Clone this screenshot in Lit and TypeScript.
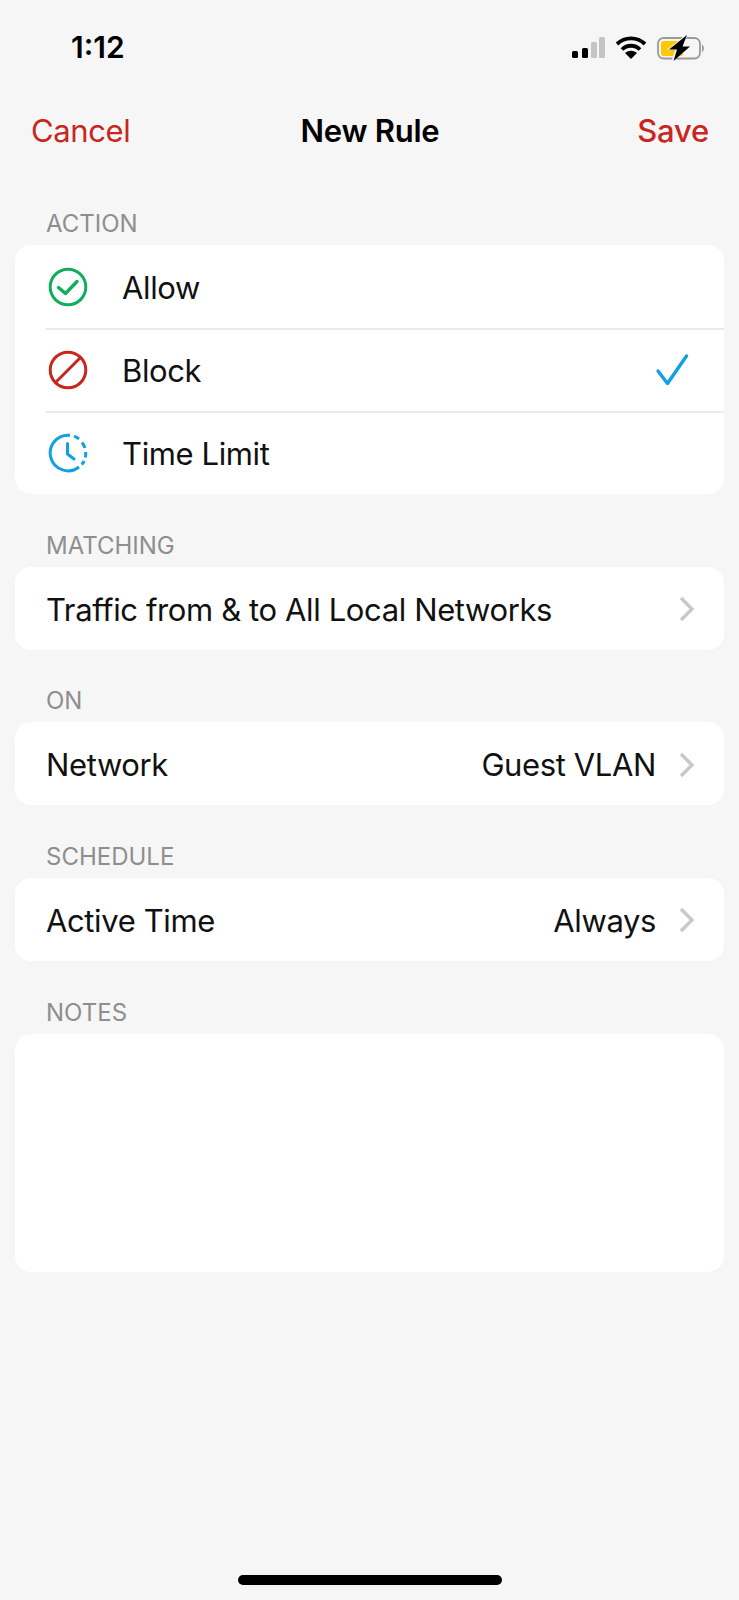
import {css, html, LitElement, svg} from 'lit'
import {customElement} from 'lit/decorators.js'

const chevron = html`
  <svg class="chevron" width="16" height="26" viewBox="0 0 16 26">
    <path d="M2 2 L13 13 L2 24" fill="none" stroke="#c8c8cc" stroke-width="3.4"/>
  </svg>`

const allowIcon = html`
  <svg width="40" height="40" viewBox="0 0 40 40" fill="none">
    <circle cx="20" cy="20" r="17.8" stroke="#0fae5b" stroke-width="3"/>
    <path d="M10.5 20.5 L17.5 26.5 L29 14.5" stroke="#0fae5b" stroke-width="3.4" stroke-linecap="round" stroke-linejoin="round"/>
  </svg>`

const blockIcon = html`
  <svg width="40" height="40" viewBox="0 0 40 40" fill="none">
    <circle cx="20" cy="20" r="17.8" stroke="#c8261f" stroke-width="3"/>
    <path d="M7.5 32.5 L32.5 7.5" stroke="#c8261f" stroke-width="3"/>
  </svg>`

const limitIcon = html`
  <svg width="40" height="40" viewBox="0 0 40 40" fill="none" stroke="#119fe6" stroke-width="3">
    <path d="M22 2.3 A17.8 17.8 0 1 0 31 34"/>
    <path d="M26 3.2 A17.8 17.8 0 0 1 31 6"/>
    <path d="M34 9.5 A17.8 17.8 0 0 1 37 15"/>
    <path d="M37.7 19 A17.8 17.8 0 0 1 37.3 24.5"/>
    <path d="M36.2 28 A17.8 17.8 0 0 1 33.7 31.6"/>
    <path d="M19.5 10.5 L19.5 21 L26 26" stroke-linecap="round" stroke-linejoin="round"/>
  </svg>`

const checkIcon = html`
  <svg width="36" height="34" viewBox="0 0 36 34" fill="none">
    <path d="M4 18 L13.5 30.5 L32.5 3" stroke="#119fe6" stroke-width="3.4" stroke-linecap="round" stroke-linejoin="round"/>
  </svg>`

const signalBars = [[0, 14, 6, 7, '#000'], [10, 11, 6, 10, '#000'], [19, 5, 6, 16, '#c4c4c4'], [27, 0, 6, 21, '#c4c4c4']]

@customElement('app-root')
export class AppRoot extends LitElement {
  static styles = css`
    :host {
      display: block;
      width: 739px;
      height: 1600px;
      background: #f6f6f6;
      font-family: Inter, "Liberation Sans", sans-serif;
      color: #111;
      position: relative;
      overflow: hidden;
    }

    .status {
      display: flex;
      align-items: center;
      justify-content: space-between;
      height: 95px;
      padding: 0 34px 0 71px;
      box-sizing: border-box;
    }

    .time {
      font-size: 30px;
      font-weight: 600;
      color: #000;
      margin-bottom: 1px;
    }

    .status-icons {
      display: flex;
      align-items: center;
      gap: 10px;
    }

    .nav {
      display: grid;
      grid-template-columns: 1fr auto 1fr;
      align-items: center;
      height: 71px;
      padding: 0 30px 0 31px;
      font-size: 31px;
      letter-spacing: -0.4px;
      box-sizing: border-box;
    }

    .nav .title {
      font-weight: 600;
      color: #000;
      letter-spacing: -0.25px;
    }

    .cancel {
      color: #c8261f;
    }

    .save {
      color: #c8261f;
      font-weight: 500;
      text-align: right;
      letter-spacing: -0.2px;
    }

    .content {
      padding: 0 15px;
      margin-top: 23px;
    }

    .label {
      font-size: 24px;
      color: #8e8e8e;
      height: 56px;
      line-height: 24px;
      padding: 23px 0 0 31px;
      box-sizing: border-box;
      text-transform: uppercase;
    }

    .card {
      background: #fff;
      border-radius: 16px;
      overflow: hidden;
      margin-bottom: 16.67px;
    }

    .row {
      display: flex;
      align-items: center;
      height: 83px;
      padding: 2px 29px 0 31px;
      font-size: 31px;
      letter-spacing: -0.38px;
      box-sizing: border-box;
    }

    .action {
      margin-left: 33px;
      padding: 0 34px 0 0;
    }

    .action span {
      padding-top: 2px;
    }

    .action svg:first-child {
      margin-right: 34px;
    }

    .divider {
      height: 2px;
      margin: 0 0 -2px 31px;
      background: #e9e9f0;
    }

    .grow {
      flex: 1;
    }

    .value {
      margin-right: 23px;
    }

    .notes {
      height: 238px;
    }

    .home {
      position: absolute;
      left: 238px;
      bottom: 15px;
      width: 264px;
      height: 10px;
      border-radius: 5px;
      background: #000;
    }
  `

  render() {
    return html`
      <div class="status">
        <span class="time">1:12</span>
        <div class="status-icons">
          <svg width="33" height="21" viewBox="0 0 33 21">
            ${signalBars.map(([x, y, w, h, c]) => svg`<rect x=${x} y=${y} width=${w} height=${h} rx="1.5" fill=${c}/>`)}
          </svg>
          <svg width="32" height="23" viewBox="0 0 32 23" fill="none" stroke="#000" stroke-width="3.8">
            <path d="M2 8 C10 0.5 22 0.5 30 8"/>
            <path d="M7 13.5 C12 8.5 20 8.5 25 13.5"/>
            <path d="M16 23 L10 17 C14 14 18 14 22 17 Z" fill="#000" stroke="none"/>
          </svg>
          <svg width="48" height="26" viewBox="0 0 48 26" fill="none">
            <rect x="1" y="3" width="42" height="20.5" rx="5.5" stroke="#9a9a9a" stroke-width="1.8"/>
            <rect x="4" y="6" width="22" height="15" rx="2.5" fill="#ffc800"/>
            <path d="M45 9.5 C47.5 10.5 47.5 16 45 17 Z" fill="#9a9a9a"/>
            <path d="M31 -2 L10 15 L18 15 L14 28 L35 10 L27 10 Z" fill="#f6f6f6"/>
            <path d="M30 0 L12 14.5 L20 14.5 L16.5 26 L33 11.5 L25.5 11.5 Z" fill="#000"/>
          </svg>
        </div>
      </div>
      <div class="nav">
        <span class="cancel">Cancel</span>
        <span class="title">New Rule</span>
        <span class="save">Save</span>
      </div>
      <div class="content">
        <div class="label">Action</div>
        <div class="card">
          <div class="row action">${allowIcon}<span class="grow">Allow</span></div>
          <div class="divider"></div>
          <div class="row action">${blockIcon}<span class="grow">Block</span>${checkIcon}</div>
          <div class="divider"></div>
          <div class="row action">${limitIcon}<span class="grow">Time Limit</span></div>
        </div>
        <div class="label">Matching</div>
        <div class="card">
          <div class="row"><span class="grow">Traffic from &amp; to All Local Networks</span>${chevron}</div>
        </div>
        <div class="label">On</div>
        <div class="card">
          <div class="row"><span class="grow">Network</span><span class="value">Guest VLAN</span>${chevron}</div>
        </div>
        <div class="label">Schedule</div>
        <div class="card">
          <div class="row"><span class="grow">Active Time</span><span class="value">Always</span>${chevron}</div>
        </div>
        <div class="label">Notes</div>
        <div class="card notes"></div>
      </div>
      <div class="home"></div>`
  }
}
